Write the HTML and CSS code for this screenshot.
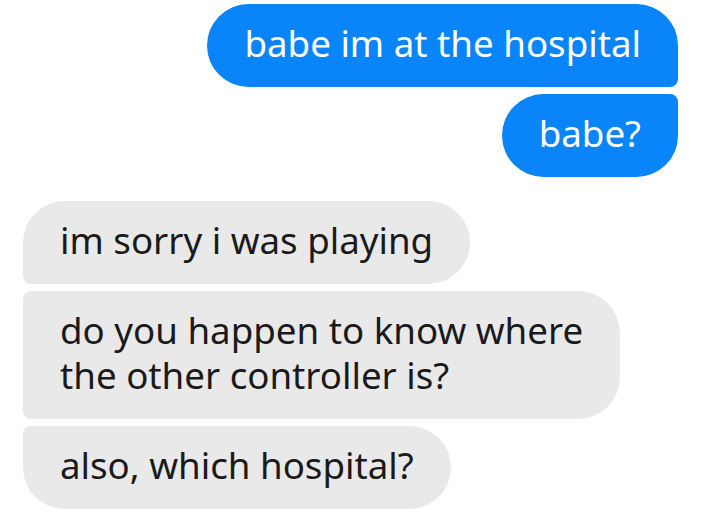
FILE: index.html
```html
<!DOCTYPE html>
<html lang="en">
<head>
  <meta charset="UTF-8">
  <meta name="viewport" content="width=device-width, initial-scale=1.0">
  <title>Chat</title>
  <link rel="stylesheet" href="styles.css">
</head>
<body>

  <div class="chat">
    <div class="group sent">
      <div class="bubble first">babe im at the hospital</div>
      <div class="bubble last">babe?</div>
    </div>

    <div class="group received">
      <div class="bubble first">im sorry i was playing</div>
      <div class="bubble middle">do you happen to know where<br>the other controller is?</div>
      <div class="bubble last">also, which hospital?</div>
    </div>
  </div>

</body>
</html>
```

FILE: styles.css
```css
* {
  box-sizing: border-box;
}

body {
  margin: 0;
  padding: 0;
  background: #fff;
  font-family: "Noto Sans", sans-serif;
}

.chat {
  display: flex;
  flex-direction: column;
  gap: 24px;
  padding: 4px 40px 0 23px;
}

.group {
  display: flex;
  flex-direction: column;
  gap: 7px;
}

.sent {
  align-items: flex-end;
}

.received {
  align-items: flex-start;
}

.bubble {
  font-size: 36.7px;
  line-height: 45px;
  padding: 17px 37px 21px;
  border-radius: 42px;
}

.sent .bubble {
  background: #0a84f9;
  color: #fff;
}

.received .bubble {
  background: #e9e9e9;
  color: #1a1a1a;
}

.sent .first {
  border-bottom-right-radius: 8px;
}

.sent .last {
  border-top-right-radius: 8px;
}

.received .first {
  border-bottom-left-radius: 8px;
}

.received .middle {
  border-top-left-radius: 8px;
  border-bottom-left-radius: 8px;
}

.received .last {
  border-top-left-radius: 8px;
}
```
